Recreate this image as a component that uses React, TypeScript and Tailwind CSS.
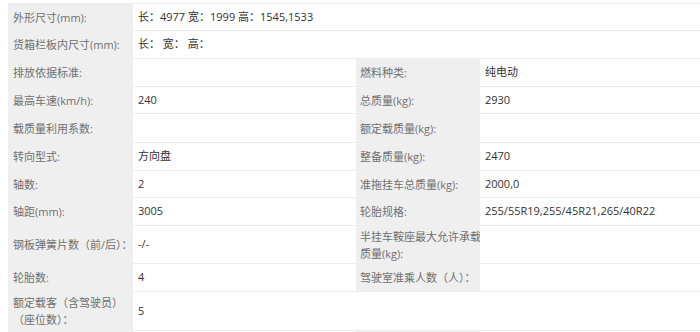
import React from 'react';

type Cell = { text?: React.ReactNode; label?: boolean; span?: string; pad?: string };

const rows: { h: string; cells: Cell[] }[] = [
  { h: 'h-[27px]', cells: [{ text: '外形尺寸(mm):', label: true }, { text: '长：4977 宽：1999 高：1545,1533', span: 'col-span-3' }] },
  { h: 'h-[28px]', cells: [{ text: '货箱栏板内尺寸(mm):', label: true }, { text: '长： 宽： 高：', span: 'col-span-3' }] },
  { h: 'h-[28px]', cells: [{ text: '排放依据标准:', label: true }, {}, { text: '燃料种类:', label: true }, { text: '纯电动' }] },
  { h: 'h-[27px]', cells: [{ text: '最高车速(km/h):', label: true }, { text: '240' }, { text: '总质量(kg):', label: true }, { text: '2930' }] },
  { h: 'h-[29px]', cells: [{ text: '载质量利用系数:', label: true }, {}, { text: '额定载质量(kg):', label: true }, {}] },
  { h: 'h-[28px]', cells: [{ text: '转向型式:', label: true }, { text: '方向盘' }, { text: '整备质量(kg):', label: true }, { text: '2470' }] },
  { h: 'h-[27px]', cells: [{ text: '轴数:', label: true }, { text: '2' }, { text: '准拖挂车总质量(kg):', label: true }, { text: '2000,0' }] },
  { h: 'h-[28px]', cells: [{ text: '轴距(mm):', label: true }, { text: '3005' }, { text: '轮胎规格:', label: true }, { text: '255/55R19,255/45R21,265/40R22' }] },
  {
    h: 'h-[38px]',
    cells: [
      { text: '钢板弹簧片数（前/后）：', label: true },
      { text: '-/-' },
      { text: <>半挂车鞍座最大允许承载<br />质量(kg):</>, label: true },
      {},
    ],
  },
  { h: 'h-[28px]', cells: [{ text: '轮胎数:', label: true }, { text: '4' }, { text: '驾驶室准乘人数（人）：', label: true }, {}] },
  {
    h: 'h-[39px]',
    cells: [{ text: <>额定载客（含驾驶员）<br />（座位数）：</>, label: true }, { text: '5' }, { span: 'col-span-2' }],
  },
  { h: 'h-[28px]', cells: [{ label: true }, {}, { label: true }, {}] },
];

export default function App() {
  return (
    <div
      className="w-[700px] h-[332px] overflow-hidden bg-white pt-[3px] pl-[8px] text-[11px]"
      style={{ fontFamily: '"Open Sans", "Noto Sans CJK SC", sans-serif' }}
    >
      <div className="grid grid-cols-[125px_223px_124px_220px]">
        {rows.map((row, i) =>
          row.cells.map((c, j) => (
            <div
              key={`${i}-${j}`}
              className={`${row.h} ${c.span ?? ''} flex items-center whitespace-nowrap border-t ${
                c.label
                  ? `bg-[#efefef] border-[#efefef] text-[#707070] leading-[17px] ${j === 0 ? 'pl-[5px]' : 'pl-[4px]'}`
                  : 'bg-white border-[#ececec] text-[#333333] pl-[5px]'
              }`}
            >
              {c.text && <span>{c.text}</span>}
            </div>
          ))
        )}
      </div>
    </div>
  );
}
